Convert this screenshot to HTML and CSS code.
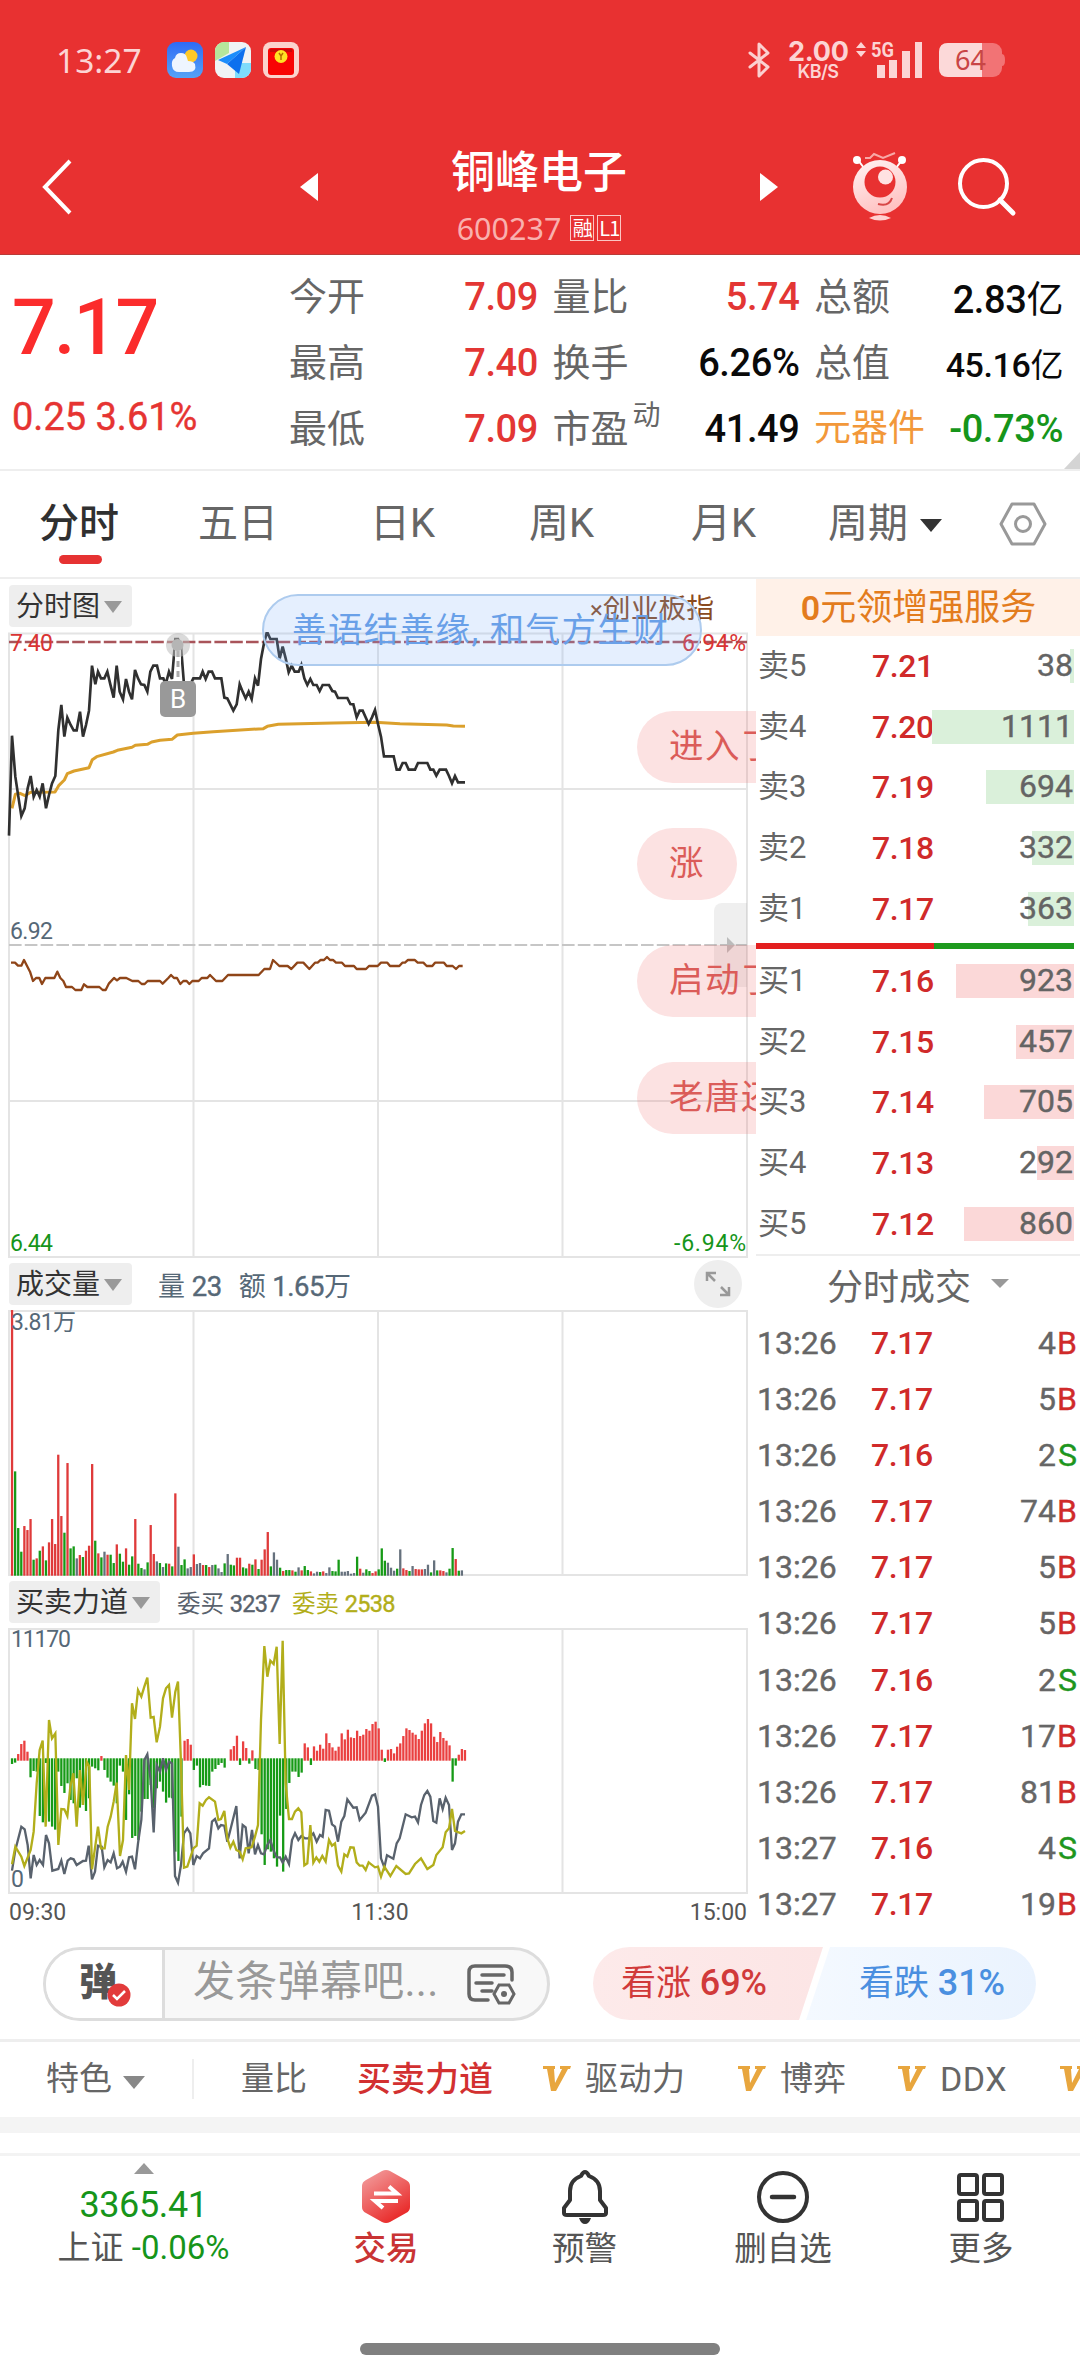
FILE: index.html
```html
<!DOCTYPE html>
<html lang="zh-CN">
<head>
<meta charset="utf-8">
<title>铜峰电子 600237</title>
<link rel="stylesheet" href="styles.css">
</head>
<body>
<div class="screen">
  <header class="top">
    <div class="status">
      <span class="clock">13:27</span>
      <svg class="app" viewBox="0 0 36 36"><defs><linearGradient id="sky" x2="0" y2="1"><stop stop-color="#2f6bf5"/><stop offset="1" stop-color="#55a3f7"/></linearGradient></defs><rect width="36" height="36" rx="9" fill="url(#sky)"/><circle cx="24" cy="14" r="6.500" fill="#ffc928"/><path d="M12 30q-6 0-7-6t3-8q1-5 6-5 5 0 6 5l1 3q5 0 7 3 2 8-6 8z" fill="#eef5ff"/></svg>
      <svg class="app" viewBox="0 0 36 36"><defs><clipPath id="ac"><rect width="36" height="36" rx="9"/></clipPath></defs><g clip-path="url(#ac)"><rect width="36" height="36" fill="#eff3f5"/><path d="M0 0h14v11L0 19z" fill="#b6e69c"/><path d="M20 21h16v15H20z" fill="#7fdcfb"/></g><path d="M31 5 3 18l9 4z" fill="#1b8dfb"/><path d="M31 5 12 22l12 10z" fill="#0c70ee"/></svg>
      <svg class="app" viewBox="0 0 36 36"><rect width="36" height="36" rx="8" fill="#fbd3cd"/><rect x="5" y="6" width="26" height="27" rx="3" fill="#f80404"/><path d="M7 7h22v3H7z" fill="#c90a0a"/><circle cx="18" cy="14.500" r="6.500" fill="#ffe324"/><path d="m16 11 2 3 2-3M18 14v4" stroke="#b57000" stroke-width="1.500" fill="none"/></svg>
      <svg class="bt" viewBox="0 0 22 36"><path d="m2 11 18 14-9 9V2l9 9L2 25" fill="none" stroke="#fbd0d0" stroke-width="3" stroke-linejoin="round" stroke-linecap="round"/></svg>
      <div class="speed"><b>2.00</b><small>KB/S</small></div>
      <svg class="signal" viewBox="0 0 70 40"><g fill="#fcd4d4"><path d="m6 1 5 6H1zM6 16l5-6H1z"/><path d="M22 24h8v13h-8zM34 19h8v18h-8zM47 10h8v27h-8zM60 1h7v36h-7z"/></g><text x="16" y="16" textLength="23" lengthAdjust="spacingAndGlyphs" class="g5">5G</text></svg>
      <svg class="battery" viewBox="0 0 68 34"><rect width="63" height="34" rx="9" fill="#f27375"/><path d="M63 11q3 0 3 6t-3 6z" fill="#f27375"/><path d="M9 0h34v34H9q-9 0-9-9V9q0-9 9-9z" fill="#fcd9d9"/><text x="16" y="27" textLength="31" lengthAdjust="spacingAndGlyphs" class="pct">64</text></svg>
    </div>
    <nav class="title-bar">
      <svg class="back" viewBox="0 0 40 60"><path d="M32 4 7 30l25 26" fill="none" stroke="#fff" stroke-width="4"/></svg>
      <svg class="prev" viewBox="0 0 20 30"><path d="M19 1v28L1 15z" fill="#fff"/></svg>
      <div class="name"><h1>铜峰电子</h1><p>600237<i>融</i><i>L1</i></p></div>
      <svg class="next" viewBox="0 0 20 30"><path d="M1 1v28l18-14z" fill="#fff"/></svg>
      <svg class="robot" viewBox="0 0 56 70"><defs><linearGradient id="rb" x2=".4" y2="1"><stop stop-color="#fff4f4"/><stop offset="1" stop-color="#ffc3c3"/></linearGradient></defs><path d="m6 8 6 8M50 8l-6 8" stroke="#fff" stroke-width="2"/><circle cx="5" cy="8" r="4" fill="#fff"/><circle cx="50" cy="8" r="4" fill="#fff"/><path d="m13 6h5l4-4 9 4 12-5" stroke="#f8a9a7" stroke-width="2" fill="none"/><circle cx="28" cy="35" r="27" fill="url(#rb)"/><circle cx="28" cy="30" r="15.500" fill="#e83131"/><circle cx="33.500" cy="25" r="7.500" fill="#ffe2e2"/><path d="M26 52q11 3 14-6" fill="none" stroke="#d84747" stroke-width="2"/><path d="M17 66q11-6 22 0-11 5-22 0z" fill="#ffd0d0"/></svg>
      <svg class="search" viewBox="0 0 60 60"><circle cx="26.500" cy="26.500" r="23.500" fill="none" stroke="#fff" stroke-width="4"/><path d="m43 43 13 13" stroke="#fff" stroke-width="5" stroke-linecap="round"/></svg>
    </nav>
  </header>

  <section class="quote">
    <div class="last"><strong>7.17</strong><span>0.25 3.61%</span></div>
    <dl class="stats">
      <div><dt>今开</dt><dd class="up">7.09</dd></div><div><dt>量比</dt><dd class="up">5.74</dd></div><div><dt>总额</dt><dd>2.83<em>亿</em></dd></div>
      <div><dt>最高</dt><dd class="up">7.40</dd></div><div><dt>换手</dt><dd>6.26%</dd></div><div><dt>总值</dt><dd class="small">45.16<em>亿</em></dd></div>
      <div><dt>最低</dt><dd class="up">7.09</dd></div><div><dt>市盈<sup>动</sup></dt><dd>41.49</dd></div><div><dt class="sector">元器件</dt><dd class="down">-0.73%</dd></div>
    </dl>
    <i class="corner"></i>
  </section>

  <nav class="tabs">
    <a class="on">分时</a><a>五日</a><a>日K</a><a>周K</a><a>月K</a><a>周期<i></i></a>
    <svg viewBox="0 0 50 46"><path d="M14 3h22l11 20-11 20H14L3 23z" fill="none" stroke="#999" stroke-width="3" stroke-linejoin="round"/><circle cx="25" cy="23" r="7.500" fill="none" stroke="#999" stroke-width="3"/></svg>
  </nav>

  <main class="market">
    <section class="charts">
      <div class="bar"><span class="pick">分时图<i></i></span><span class="index"><small>×</small>创业板指</span></div>
      <svg class="c1" viewBox="0 632 756 626" id="price">
        <g class="grid"><path d="M9 633.500H747V1257H9zM9 789H747M9 1101H747M193.500 633V1257M378 633V1257M562.500 633V1257"/></g>
        <path d="M9 642H747" stroke="#a9545a" stroke-width="2.500" stroke-dasharray="12.600 3.200"/>
        <path d="M9 945H747" stroke="#c6c6c6" stroke-width="2" stroke-dasharray="12.600 3.200"/>
        <text class="t up" x="10" y="651" textLength="43">7.40</text>
        <text class="t up" x="682" y="651" textLength="64">6.94%</text>
        <text class="t" x="10" y="939" textLength="43">6.92</text>
        <text class="t down" x="10" y="1251" textLength="43">6.44</text>
        <text class="t down" x="674" y="1251" textLength="72">-6.94%</text>
        <g transform="translate(0 620) scale(.33333)" fill="none" stroke-linejoin="round">
          <polyline stroke="#dba02c" stroke-width="9" points="36,565 46,523 60,520 75,527 92,517 165,516 176,497 193,480 202,461 222,453 267,443 277,419 290,410 340,396 352,391 396,382 406,376 442,373 455,366 480,361 516,358 532,345 580,340 640,335 790,326 802,319 835,313 1000,309 1125,307 1200,311 1340,315 1360,318 1395,319"/>
          <polyline stroke="#303030" stroke-width="8" stroke-linejoin="miter" points="27,647 36,347 46,470 55,530 64,588 74,565 83,505 92,468 101,530 110,510 119,530 128,490 138,565 147,525 156,490 166,468 175,330 184,255 193,350 202,293 212,315 221,331 230,331 240,275 249,350 258,315 267,272 276,137 286,193 294,155 303,175 313,175 322,155 331,193 341,233 350,137 359,215 369,238 378,177 387,215 396,238 405,150 414,175 423,193 433,195 442,215 451,155 460,137 471,137 480,175 490,175 497,193 507,155 516,177 526,57 534,57 543,80 552,193 571,193 580,175 600,175 608,155 617,177 626,155 636,155 645,175 664,175 673,233 682,235 700,272 710,253 719,193 728,215 737,235 746,215 755,237 765,175 774,197 783,117 792,70 801,35 811,57 830,57 839,115 848,80 857,115 866,157 875,137 884,155 896,155 904,135 913,175 922,195 931,177 940,195 950,195 959,213 968,195 987,195 997,213 1005,215 1014,234 1042,234 1051,252 1060,253 1070,292 1079,272 1088,272 1106,312 1116,292 1125,270 1134,312 1143,350 1152,409 1181,409 1190,449 1199,449 1208,429 1217,429 1226,449 1245,449 1254,429 1282,429 1291,449 1300,449 1309,467 1319,449 1338,449 1347,468 1356,490 1365,468 1374,487 1395,487"/>
          <polyline stroke="#8f4518" stroke-width="7" points="33,1028 45,1028 54,1037 64,1037 72,1020 90,1055 99,1083 108,1074 118,1074 126,1092 136,1074 163,1074 172,1055 181,1074 190,1083 198,1101 216,1101 226,1110 244,1110 252,1093 262,1101 298,1101 308,1110 317,1110 327,1090 342,1074 351,1081 360,1074 379,1074 397,1083 415,1083 425,1092 434,1092 443,1083 480,1083 488,1091 505,1074 513,1065 522,1074 531,1074 541,1092 550,1083 560,1083 568,1092 577,1083 596,1083 605,1074 622,1074 630,1065 648,1083 667,1083 684,1065 776,1065 793,1047 810,1047 819,1020 838,1038 863,1038 874,1047 892,1028 910,1028 928,1047 945,1028 953,1028 962,1020 972,1020 981,1011 990,1020 999,1020 1008,1028 1026,1028 1035,1038 1062,1038 1070,1047 1098,1047 1107,1038 1133,1038 1143,1028 1162,1028 1170,1038 1198,1038 1207,1028 1215,1028 1224,1020 1244,1020 1253,1028 1270,1028 1280,1038 1297,1038 1305,1028 1332,1028 1340,1038 1358,1038 1368,1047 1377,1038 1388,1038"/>
        </g>
        <path d="M178 645v37" stroke="#fff" stroke-width="6"/><path d="M178 651v30" stroke="#aaa" stroke-width="3" stroke-dasharray="6 4"/>
        <circle cx="178" cy="645" r="12" fill="#bbb" opacity=".55"/><circle cx="177.500" cy="645" r="6" fill="#b5b5b5"/>
        <rect x="160" y="681" width="36" height="36" rx="5" fill="#999"/><text x="170" y="708" class="mark">B</text>
      </svg>
      <div class="bar"><span class="pick">成交量<i></i></span><span class="info">量 <b>23</b></span><span class="info second">额 <b>1.65</b>万</span>
        <svg class="expand" viewBox="0 0 48 48"><circle cx="24" cy="24" r="24" fill="#eee"/><path d="M21 21 13 13m0 8v-8h9M27 27l8 8m0-8v8h-9" fill="none" stroke="#999" stroke-width="2.500"/></svg></div>
      <svg class="c2" viewBox="0 1310 756 267">
        <g class="grid"><path d="M9 1311H747V1575H9zM193.500 1311V1575M378 1311V1575M562.500 1311V1575"/></g>
        <g id="volume"></g>
        <text class="t" x="11" y="1330" textLength="65">3.81万</text>
      </svg>
      <div class="bar last-bar"><span class="pick">买卖力道<i></i></span><span class="entrust">委买 <b>3237</b></span><span class="entrust sell">委卖 <b>2538</b></span></div>
      <svg class="c3" viewBox="0 1628 756 267">
        <g class="grid"><path d="M9 1629H747V1893H9zM193.500 1629V1893M378 1629V1893M562.500 1629V1893"/></g>
        <g id="force"></g>
        <text class="t" x="11" y="1647" textLength="60">11170</text><text class="t" x="11" y="1887">0</text>
        <g transform="translate(0 1620) scale(.33333)" fill="none" stroke-width="7">
          <polyline stroke="#59626d" points="36,752 46,690 64,620 74,628 83,675 92,775 101,705 110,735 119,720 129,735 138,645 147,670 157,752 175,747 184,722 193,762 203,722 212,715 221,718 230,735 249,723 258,722 266,677 276,778 285,755 294,677 305,680 313,742 323,720 332,727 341,700 351,745 360,740 368,725 378,755 387,712 396,710 405,748 414,670 424,600 433,420 442,403 452,480 461,637 470,435 480,455 489,415 498,450 507,425 516,430 525,768 534,788 543,735 552,640 562,625 571,640 580,735 590,708 600,715 609,700 627,685 636,605 645,597 655,625 663,615 673,617 682,665 691,630 709,558 719,715 728,615 737,622 746,700 756,630 765,703 774,675 783,700 792,703 802,675 811,660 820,690 830,712 840,712 848,728 857,710 867,732 876,660 885,640 895,660 904,648 915,655 925,655 940,640 950,665 960,645 968,650 977,570 987,572 996,613 1005,620 1014,665 1024,605 1033,588 1042,538 1060,563 1070,562 1079,600 1097,578 1116,527 1125,523 1134,560 1143,715 1153,742 1161,706 1180,716 1190,670 1199,655 1217,583 1235,592 1245,590 1254,607 1263,555 1273,525 1282,513 1291,530 1300,603 1309,608 1319,535 1328,567 1337,533 1347,555 1356,690 1365,670 1374,605 1384,583 1395,583"/>
          <polyline stroke="#b2ae1b" points="36,733 46,680 64,710 73,738 92,690 101,635 110,490 119,390 128,362 137,620 147,300 156,355 166,340 175,675 184,567 193,568 202,588 211,500 220,460 230,620 240,450 249,555 260,425 268,440 276,748 294,620 303,685 314,685 323,620 332,590 341,545 350,488 360,708 369,660 378,405 387,510 396,250 405,297 414,210 424,230 433,200 442,173 452,293 461,291 470,367 480,320 489,235 498,205 507,195 516,293 526,215 534,185 543,430 552,743 562,740 580,685 590,677 599,550 608,557 618,540 627,532 645,545 655,600 663,597 673,573 682,655 691,683 700,665 709,690 719,695 728,718 737,685 755,682 765,650 774,615 783,300 793,78 802,170 811,122 821,132 830,80 839,372 848,62 857,490 867,597 876,597 885,575 895,565 904,577 913,736 922,730 931,615 940,728 949,712 958,725 967,708 977,725 987,660 996,677 1005,670 1014,737 1024,755 1033,703 1042,710 1051,682 1061,683 1070,727 1079,737 1088,737 1097,750 1106,727 1125,742 1134,740 1143,770 1153,740 1171,768 1189,738 1217,762 1227,760 1245,732 1263,715 1282,747 1300,735 1309,705 1328,682 1337,637 1347,625 1356,567 1365,633 1384,640 1395,633"/>
        </g>
      </svg>
      <div class="axis"><span>09:30</span><span>11:30</span><span>15:00</span></div>
      <div class="handle"></div>
      <div class="bullet blue">善语结善缘, 和气方生财</div>
      <div class="bullet b1">进入了</div><div class="bullet b2">涨</div><div class="bullet b3">启动了</div><div class="bullet b4">老唐还</div>
    </section>

    <aside class="book">
      <div class="promo"><b>0</b>元领增强服务</div>
      <div class="depth ask">
        <div><span>卖5</span><b>7.21</b><em style="--w:4px">38</em></div>
        <div><span>卖4</span><b>7.20</b><em style="--w:142px">1111</em></div>
        <div><span>卖3</span><b>7.19</b><em style="--w:88px">694</em></div>
        <div><span>卖2</span><b>7.18</b><em style="--w:42px">332</em></div>
        <div><span>卖1</span><b>7.17</b><em style="--w:46px">363</em></div>
      </div>
      <div class="ratio"></div>
      <div class="depth bid">
        <div><span>买1</span><b>7.16</b><em style="--w:118px">923</em></div>
        <div><span>买2</span><b>7.15</b><em style="--w:58px">457</em></div>
        <div><span>买3</span><b>7.14</b><em style="--w:90px">705</em></div>
        <div><span>买4</span><b>7.13</b><em style="--w:37px">292</em></div>
        <div><span>买5</span><b>7.12</b><em style="--w:110px">860</em></div>
      </div>
      <div class="deals-head">分时成交<i></i></div>
      <div class="deals">
        <div><span>13:26</span><b>7.17</b><em>4</em><u>B</u></div>
        <div><span>13:26</span><b>7.17</b><em>5</em><u>B</u></div>
        <div><span>13:26</span><b>7.16</b><em>2</em><u class="s">S</u></div>
        <div><span>13:26</span><b>7.17</b><em>74</em><u>B</u></div>
        <div><span>13:26</span><b>7.17</b><em>5</em><u>B</u></div>
        <div><span>13:26</span><b>7.17</b><em>5</em><u>B</u></div>
        <div><span>13:26</span><b>7.16</b><em>2</em><u class="s">S</u></div>
        <div><span>13:26</span><b>7.17</b><em>17</em><u>B</u></div>
        <div><span>13:26</span><b>7.17</b><em>81</em><u>B</u></div>
        <div><span>13:27</span><b>7.16</b><em>4</em><u class="s">S</u></div>
        <div><span>13:27</span><b>7.17</b><em>19</em><u>B</u></div>
      </div>
    </aside>
  </main>

  <section class="talk">
    <div class="composer">
      <div class="toggle">弹<svg viewBox="0 0 24 24"><circle cx="12" cy="12" r="11.500" fill="#e23b3b"/><path d="m6 12 4 4 8-8" fill="none" stroke="#fff" stroke-width="2.500"/></svg></div>
      <div class="field"><span>发条弹幕吧...</span><svg viewBox="0 0 50 42"><path d="M22 37H9q-6 0-6-6V9q0-6 6-6h30q7 0 7 6v8M16 12h22M10 20h16M16 28h10" fill="none" stroke="#666" stroke-width="3.500" stroke-linecap="round"/><path d="M33 22h10l5 9-5 9H33l-5-9z" fill="#f8f8f8" stroke="#666" stroke-width="3"/><circle cx="38" cy="31" r="3" fill="#666"/></svg></div>
    </div>
    <div class="vote"><span class="rise">看涨 <b>69%</b></span><span class="fall">看跌 <b>31%</b></span></div>
  </section>

  <nav class="features">
    <span class="f0">特色<i></i></span><span class="f1">量比</span><span class="f2">买卖力道</span>
    <span class="f3"><svg viewBox="0 0 28 25"><path d="M0 0h12v3h-1l1 14 7-14h-2V0h11l-1 3h-2L13 25H8L4 3H0z" fill="#e8a63e"/></svg>驱动力</span>
    <span class="f4"><svg viewBox="0 0 28 25"><path d="M0 0h12v3h-1l1 14 7-14h-2V0h11l-1 3h-2L13 25H8L4 3H0z" fill="#e8a63e"/></svg>博弈</span>
    <span class="f5"><svg viewBox="0 0 28 25"><path d="M0 0h12v3h-1l1 14 7-14h-2V0h11l-1 3h-2L13 25H8L4 3H0z" fill="#e8a63e"/></svg><b>DDX</b></span>
    <span class="f6"><svg viewBox="0 0 28 25"><path d="M0 0h12v3h-1l1 14 7-14h-2V0h11l-1 3h-2L13 25H8L4 3H0z" fill="#e8a63e"/></svg></span>
  </nav>
  <div class="band"></div>

  <footer class="dock">
    <div class="sh"><i></i><strong>3365.41</strong><p>上证 <b>-0.06%</b></p></div>
    <div class="it trade"><svg viewBox="0 0 54 54"><defs><linearGradient id="tr" x1=".2" x2=".8" y2="1"><stop stop-color="#f29a9a"/><stop offset="1" stop-color="#e8201f"/></linearGradient></defs><path d="M23 1q4-2 8 0l16 9q4 2 4 6v21q0 4-4 6l-16 9q-4 2-8 0L7 43q-4-2-4-6V16q0-4 4-6z" fill="url(#tr)"/><path d="M15 23.500h23l-8-7M39 31H16l8 7" fill="none" stroke="#fff" stroke-width="4"/></svg>交易</div>
    <div class="it"><svg viewBox="0 0 54 54"><path d="M27 2q2 0 4 4c8 3 11 8 11 15v9l6 8v5q0 2-3 2H9q-3 0-3-2v-5l6-8v-9c0-7 3-12 11-15q2-4 4-4z" fill="none" stroke="#333" stroke-width="4" stroke-linejoin="round"/><path d="M21 48h12q-2 6-6 6t-6-6z" fill="#333"/></svg>预警</div>
    <div class="it"><svg viewBox="0 0 54 54"><circle cx="27" cy="27" r="24" fill="none" stroke="#333" stroke-width="4"/><path d="M16 27h22" stroke="#333" stroke-width="4.500" stroke-linecap="round"/></svg>删自选</div>
    <div class="it"><svg viewBox="0 0 54 54"><g fill="none" stroke="#333" stroke-width="4"><rect x="5" y="5" width="18" height="19" rx="2"/><rect x="30" y="5" width="18" height="19" rx="2"/><rect x="5" y="31" width="18" height="19" rx="2"/><rect x="30" y="31" width="18" height="19" rx="2"/></g></svg>更多</div>
  </footer>
  <div class="home"></div>
</div>
<script src="charts.js"></script>
</body>
</html>
```
FILE: styles.css
```css
* { box-sizing: border-box; }
body, h1, p, dl, dd { margin: 0; }
body { background: #fff; font-family: Roboto, "Noto Sans CJK SC", sans-serif; color: #666; }
i, em, u { font-style: normal; text-decoration: none; }
b { font-weight: 500; }
svg { display: block; flex: none; }
.screen { width: 1080px; height: 2376px; overflow: hidden; }

.top { height: 255px; background: #e83131; color: #fff; border-bottom: 1px solid #b93b38; }
.status { display: flex; align-items: center; height: 120px; padding-left: 56px; }
.clock { font: 33.500px/40px "Noto Sans", sans-serif; color: #fcd4d4; width: 111px; }
.app { width: 36px; height: 36px; margin-right: 12px; }
.bt { width: 22px; height: 36px; margin: 0 18px 0 437px; }
.speed { width: 60px; height: 38px; color: #fcd4d4; text-align: center; font-family: Inter, sans-serif; }
.speed b { display: block; font-size: 27px; line-height: 22px; font-weight: 700; letter-spacing: -.2px; }
.speed small { display: block; font-size: 18px; line-height: 18px; font-weight: 600; letter-spacing: -.5px; }
.signal { width: 70px; height: 40px; margin: 1px 0 0 7px; }
.g5 { font: 700 21px Roboto; fill: #fcd4d4; }
.battery { width: 68px; height: 34px; margin-left: 14px; }
.pct { font: 28px "Noto Sans"; fill: #c94545; }
.title-bar { display: flex; align-items: center; height: 134px; padding-left: 38px; }
.back { width: 40px; height: 60px; }
.prev { width: 20px; height: 30px; margin-left: 221px; }
.next { width: 20px; height: 30px; margin-left: 100px; }
.name { width: 240px; margin-left: 100px; text-align: center; padding-top: 19px; }
.name h1 { font-size: 44px; line-height: 56px; font-weight: 500; margin-top: -2px; }
.name p { display: flex; justify-content: center; align-items: center; gap: 3px; font: 30.500px/38px "Noto Sans", sans-serif; color: #f9b0ae; margin-top: 8px; }
.name p i { width: 24px; height: 26px; border: 1.500px solid #fbc6c4; font: 20px/23px "Noto Sans CJK SC"; color: #fff; text-align: center; letter-spacing: -1px; }
.name p i:first-child { margin-left: 6px; }
.robot { width: 56px; height: 70px; margin-left: 73px; }
.search { width: 60px; height: 60px; margin-left: 49px; }

.quote { position: relative; display: flex; height: 216px; border-bottom: 2px solid #eee; }
.last { width: 289px; padding-left: 12px; color: #e63432; font-weight: 500; }
.last strong { display: block; font-size: 77px; line-height: 90px; margin-top: 28px; font-weight: 500; color: #fb2c2c; letter-spacing: -1.800px; }
.last span { display: block; font-size: 38px; line-height: 44px; margin-top: 22px; font-weight: 400; -webkit-text-stroke: .4px; }
.stats { display: grid; grid-template-columns: 249px 247px 249px; grid-template-rows: repeat(3, 66px); column-gap: 14.500px; padding-top: 9px; }
.stats div { display: flex; justify-content: space-between; align-items: center; white-space: nowrap; }
.stats dt { font-size: 38px; line-height: 56px; }
.stats dd { font-size: 38px; font-weight: 500; color: #0a0a0a; letter-spacing: -.4px; }
.stats dd em { font-size: 37px; font-weight: 400; }
.stats .small { font-size: 34px; }
.stats .small em { font-size: 33px; }
.stats sup { font-size: 28px; line-height: 20px; margin-left: 4px; vertical-align: 17px; }
.up { color: #e33634 !important; fill: #d93434 !important; }
.down { color: #16951a !important; fill: #16951a !important; }
.stats .sector { color: #f2983a; font-size: 37px; }
.corner { position: absolute; right: 0; bottom: 0; border: solid transparent; border-width: 17px 0 0 16px; border-bottom: 17px solid #d4d4d4; border-top: 0; }

.tabs { display: flex; align-items: center; height: 108px; border-bottom: 2px solid #eee; padding-left: 39px; font-size: 40px; line-height: 60px; color: #666; }
.tabs a { position: relative; white-space: nowrap; width: 159px; font-weight: 400; }
.tabs a:nth-child(2) { width: 172px; }
.tabs a:nth-child(3) { width: 159px; }
.tabs a:nth-child(4) { width: 162px; }
.tabs a:nth-child(5) { width: 137px; }
.tabs a:nth-child(6) { width: 170px; }
.tabs .on { color: #303030; font-weight: 500; }
.tabs .on::after { content: ""; position: absolute; left: 20px; bottom: -10px; width: 43px; height: 9px; border-radius: 5px; background: #e63232; }
.tabs a i { display: inline-block; border: 11px solid transparent; border-top: 13px solid #333; border-bottom: 0; margin-left: 12px; vertical-align: 5px; }
.tabs svg { width: 50px; height: 46px; }

.market { display: flex; height: 1361px; }
.charts { position: relative; width: 756px; overflow: hidden; padding-top: 6px; }
.charts > svg { width: 756px; }
.bar { display: flex; align-items: center; height: 42px; margin-bottom: 5px; padding-left: 9px; }
.c1 { height: 626px; margin-bottom: 5px; }
.c2, .c3 { height: 267px; }
.last-bar { margin-top: 4px; }
.pick { display: flex; align-items: center; height: 42px; padding: 2px 10px 0 7px; border-radius: 4px; background: #eee; color: #333; font-size: 28px; line-height: 40px; }
.pick i { border: 9px solid transparent; border-top: 12px solid #999; border-bottom: 0; margin-left: 4px; }
.index { margin-left: 458px; font-size: 27.800px; color: #8a4a20; }
.index small { font-size: 24px; }
.info { margin-left: 26px; font-size: 27px; color: #566877; }
.info b, .entrust b { font-weight: 400; -webkit-text-stroke: .4px; }
.info b { font-size: 27.500px; letter-spacing: -.5px; }
.info.second { margin-left: 17px; }
.expand { width: 48px; height: 48px; margin: -3px 0 -3px 343px; }
.entrust { margin-left: 17px; font-size: 23.500px; color: #59626d; }
.entrust b { letter-spacing: -.7px; }
.entrust.sell { margin-left: 12px; color: #b2ae1b; }
.grid { fill: none; stroke: #e4e4e4; stroke-width: 2; }
.t { font: 500 23px Roboto, "Noto Sans CJK SC"; fill: #566877; font-weight: 400; stroke-width: .3px; }
.mark { font: 26px Roboto; fill: #fff; }
.axis { display: grid; grid-template-columns: 1fr 1fr 1fr; padding: 5px 9px 0; font-size: 23px; line-height: 26px; color: #555; }
.axis span:nth-child(2) { text-align: center; padding-left: 4px; }
.axis span:nth-child(3) { text-align: right; }
.handle { position: absolute; left: 714px; top: 324px; width: 33px; height: 84px; border-radius: 8px 0 0 8px; background: rgba(150,150,150,.15); }
.handle::after { content: ""; position: absolute; left: 13px; top: 34px; border: 8px solid transparent; border-left: 8px solid #bbb; border-right: 0; }
.bullet { position: absolute; left: 637px; height: 72px; border-radius: 36px; padding: 0 32px; font-size: 34.500px; letter-spacing: 1.500px; line-height: 71px; white-space: nowrap; background: rgba(240,110,110,.2); color: #db5c59; }
.bullet.blue { left: 262px; top: 15px; width: 440px; border: 2px solid #adcbee; padding: 0 28px; background: rgba(125,175,250,.2); color: #69a0e8; letter-spacing: 1.400px; line-height: 68px; }
.b1 { top: 132px; } .b2 { top: 249px; } .b3 { top: 366px; } .b4 { top: 483px; }

.book { width: 324px; }
.promo { height: 57px; background: #fff1e8; color: #e37c1d; font-size: 36px; line-height: 59px; text-align: center; padding-left: 1px; }
.promo b { font-weight: 600; font-size: 34px; }
.depth > div { display: grid; grid-template-columns: 114px 71px 1fr; align-items: center; height: 60.600px; padding: 0 6px 0 2px; font-size: 32px; }
.depth span { font-size: 31px; line-height: 40px; }
.depth b, .deals b { color: #d02a2a; letter-spacing: -.4px; }
.depth em { height: 34px; line-height: 32px; text-align: right; padding-right: 1px; justify-self: stretch; background: linear-gradient(var(--c), var(--c)) right / var(--w) 100% no-repeat; margin-left: -11px; font-weight: 400; -webkit-text-stroke: .4px; color: #646464; }
.ask { --c: #daf0da; height: 307px; }
.bid { --c: #fbd8d8; height: 305px; padding-top: 2px; }
.ratio { height: 6px; margin-right: 6px; background: linear-gradient(90deg, #e31f1f 178px, #1e9a1e 178px); }
.deals-head { display: flex; align-items: center; height: 61px; border-top: 2px solid #eee; padding: 0 0 4px 71px; font-size: 36px; }
.deals-head i { border: 9px solid transparent; border-top: 9px solid #999; border-bottom: 0; margin-left: 20px; }
.deals > div { display: grid; grid-template-columns: 114px 70px 1fr 21px; align-items: center; height: 56.080px; font-size: 32px; padding: 0 3px 0 1px; line-height: 40px; }
.deals span, .deals em { -webkit-text-stroke: .4px; }
.deals em { text-align: right; }
.deals u { color: #d02a2a; text-align: right; font-size: 32px; -webkit-text-stroke: .4px; }
.deals u.s { color: #1e961e; }

.talk { display: flex; height: 102px; padding: 7px 0 0 43px; border-bottom: 3px solid #eee; }
.composer { display: flex; width: 507px; height: 74px; border: 3px solid #ddd; border-radius: 37px; background: #f8f8f8; overflow: hidden; }
.toggle { position: relative; width: 119px; border-right: 3px solid #ddd; background: #fff; padding-left: 33px; font-size: 38px; line-height: 64px; font-weight: 900; color: #555; }
.toggle svg { position: absolute; left: 61px; top: 33px; width: 24px; height: 24px; }
.field { display: flex; align-items: center; flex: 1; padding-left: 28px; color: #999; font-size: 42px; line-height: 62px; white-space: nowrap; }
.field span { margin-top: -4px; letter-spacing: .3px; }
.field svg { width: 50px; height: 42px; margin-left: auto; margin-right: 31px; }
.vote { display: flex; margin-left: 43px; font-size: 35px; line-height: 72px; white-space: pre; }
.vote span { height: 73px; }
.vote b { font-size: 36px; font-weight: 500; }
.rise { width: 230px; padding-left: 28px; border-radius: 37px 0 0 37px; color: #d13a3a; background: linear-gradient(90deg, #fdeaea, #fce5e5); clip-path: polygon(0 0, 100% 0, 206px 100%, 0 100%); }
.fall { width: 230px; margin-left: -17px; padding-left: 53px; border-radius: 0 37px 37px 0; color: #4a8fe0; background: linear-gradient(90deg, #f4f9ff, #eaf3fe); clip-path: polygon(24px 0, 100% 0, 100% 100%, 0 100%); }

.features { display: flex; align-items: center; height: 75px; font-size: 33px; line-height: 48px; white-space: nowrap; overflow: hidden; padding: 0 0 2px 46px; }
.features span { display: flex; align-items: center; flex: none; }
.features i { border: 11px solid transparent; border-top: 13px solid #888; border-bottom: 0; margin: 8px 0 0 11px; }
.features svg { width: 28px; height: 25px; margin-right: 14px; }
.features b { font-weight: 400; font-size: 34px; letter-spacing: .5px; }
.f0 { width: 148px; height: 40px; border-right: 2px solid #eee; }
.f1 { width: 116px; margin-left: 47px; }
.f2 { width: 186px; color: #d23030; font-size: 34px; font-weight: 500; }
.f3 { width: 195px; letter-spacing: .5px; } .f4 { width: 160px; } .f5 { width: 162px; }
.band { height: 16px; margin-bottom: 20px; background: #f4f4f4; }

.dock { display: grid; grid-template-columns: 287px 198px 199px 198px 198px; height: 190px; border-top: 3px solid #f3f3f3; }
.sh { display: flex; flex-direction: column; align-items: center; color: #16951a; }
.sh i { border: 10px solid transparent; border-bottom: 11px solid #999; border-top: 0; margin-top: 7px; }
.sh strong { font-size: 36px; line-height: 44px; font-weight: 400; margin-top: 9px; letter-spacing: -.4px; }
.sh p { font-size: 33px; line-height: 40px; color: #555; margin-top: 1px; white-space: pre; }
.sh b { font-size: 33px; font-weight: 400; color: #16951a; }
.it { display: flex; flex-direction: column; align-items: center; padding-top: 14px; font-size: 32.500px; line-height: 40px; gap: 5px; color: #555; }
.it svg { width: 54px; height: 54px; }
.trade { color: #c93434; font-weight: 500; }
.home { width: 360px; height: 12px; margin: 0 auto; border-radius: 6px; background: #808080; }
```
FILE: charts.js
```js
const STEP = 9.243 / 3;
const COLORS = { r: "#df3a3a", g: "#169a16", b: "#66717d" };

// Each entry is a colour letter followed by the bar height in thirds of a pixel.
const volume = "r797 g313 g143 g72 r149 r137 r170 g48 r52 g75 r88 g46 r100 r170 r95 r363 r179 g129 r338 g82 g88 b52 r62 g56 r75 r90 r335 g105 r67 g55 b72 r63 g63 g38 r94 g66 g42 r82 g33 g58 r170 g36 g23 b19 g40 r152 r65 b43 g38 b26 g37 r36 g28 r247 b87 g32 g49 b22 b26 r64 b35 b38 r32 g32 r26 b32 g33 b22 b11 g37 b65 g33 g31 r54 r54 g25 g22 r36 g33 r49 g20 r48 r79 r131 g28 b70 b48 g24 r14 g17 g17 r16 g12 b25 r16 g29 g17 r13 b7 b12 g11 r13 b8 b25 g14 g13 g48 b12 b12 b14 b6 b8 g57 r21 b9 g19 g14 r8 r13 g19 g82 g45 b39 b24 b15 g21 b79 r22 r17 g14 b29 r20 r19 r19 b20 b33 g10 b46 g16 r16 r14 b10 g21 g83 r50 g15 b16".split(" ");

// Buying pressure is positive, selling pressure negative.
const force = [-17,-13,20,50,60,27,-57,-38,-40,-173,-192,-14,-190,-205,-214,-40,-83,-104,-75,-125,-135,-60,-148,-140,-158,-120,-25,-30,-36,14,-35,-58,-70,-82,-135,-22,-40,-185,-108,-239,-233,-245,-160,-122,-122,-80,-150,-90,-70,-100,-133,-118,-120,-280,-308,-175,60,65,48,-35,-22,-87,-80,-82,-83,-40,-32,-20,-14,-28,0,34,44,75,-20,58,38,-16,31,-32,-35,-228,-320,-273,-280,-300,-325,-172,-340,-152,-74,-40,-40,-56,-43,52,40,-20,43,30,48,36,82,53,40,30,42,82,64,93,70,68,90,74,78,95,90,110,117,97,33,-11,33,35,22,42,52,74,97,92,84,78,65,90,112,125,112,72,56,86,68,60,46,-70,-22,18,35,32];

function bar(host, i, y, h, fill) {
  const r = document.createElementNS("http://www.w3.org/2000/svg", "rect");
  const a = { x: (10.9 + i * STEP).toFixed(2), y, width: 2.3, height: h, fill };
  for (const k in a) r.setAttribute(k, a[k]);
  host.appendChild(r);
}

const vol = document.getElementById("volume");
volume.forEach((v, i) => {
  const h = v.slice(1) / 3;
  bar(vol, i, 1575.7 - h, h, COLORS[v[0]]);
});

const frc = document.getElementById("force");
force.forEach((v, i) => {
  const h = Math.abs(v) / 3;
  if (v > 0) bar(frc, i, 1760.7 - h, h, "#ea4040");
  if (v < 0) bar(frc, i, 1758.3, h, COLORS.g);
});
```
